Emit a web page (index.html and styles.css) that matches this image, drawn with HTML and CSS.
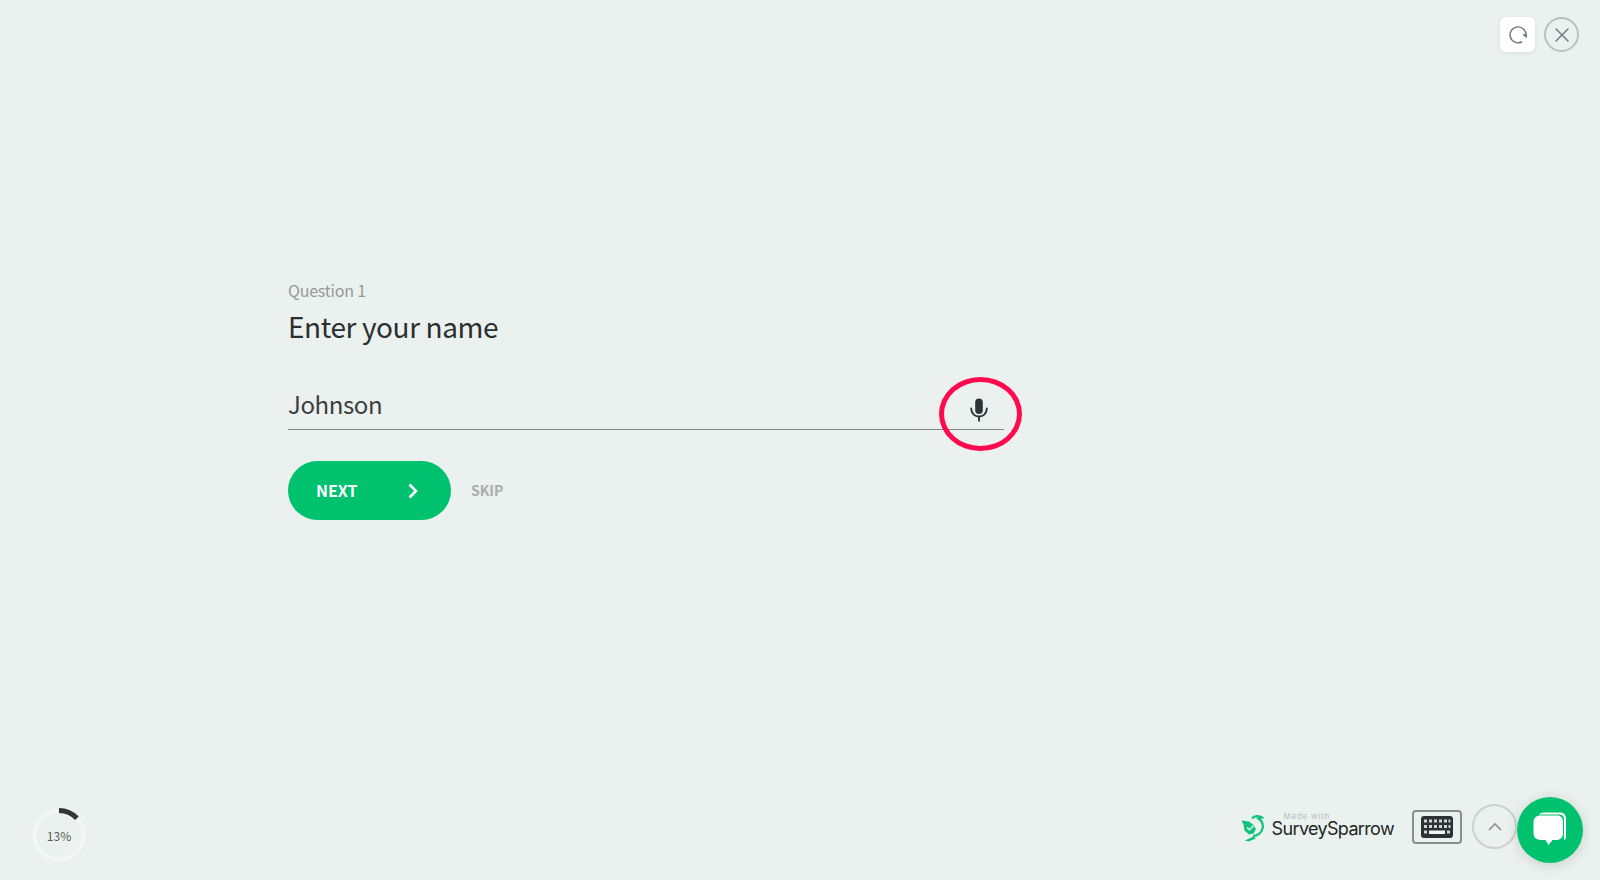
FILE: index.html
```html
<!DOCTYPE html>
<html lang="en">
<head>
<meta charset="utf-8">
<title>Survey</title>
<link rel="stylesheet" href="styles.css">
</head>
<body>
<div class="page">
  <header class="topbar">
    <button class="tool tool-refresh" aria-label="Restart">
      <svg width="18" height="18" viewBox="0 0 18 18" fill="none" stroke="#6f7577" stroke-width="1.4" stroke-linecap="round"><path d="M12.600 16A8 8 0 1 1 17 9.500"/><path d="M14.800 8.600l2.200 2.200 1-2.600" stroke-width="1.500"/></svg>
    </button>
    <button class="tool tool-close" aria-label="Close">
      <svg width="16" height="16" viewBox="0 0 16 16" fill="none" stroke="#6f7577" stroke-width="1.4" stroke-linecap="round"><path d="M2 2l12 12M14 2L2 14"/></svg>
    </button>
  </header>

  <main class="question">
    <p class="q-number">Question 1</p>
    <h1 class="q-title">Enter your name</h1>
    <div class="answer">
      <span class="answer-value">Johnson</span>
      <svg class="mic" width="20" height="24" viewBox="0 0 20 24" fill="none"><rect x="6.200" y="0.500" width="7.600" height="15.500" rx="3.800" fill="#2e3434"/><path d="M2.200 10.500c0 4.800 3.400 8 7.800 8s7.800-3.200 7.800-8" stroke="#2e3434" stroke-width="1.900" stroke-linecap="round"/><path d="M10 18.500V23.500" stroke="#2e3434" stroke-width="1.900"/></svg>
      <span class="annotation"></span>
    </div>
    <div class="actions">
      <button class="next">
        <span class="next-label">NEXT</span>
        <svg width="10" height="16" viewBox="0 0 10 16" fill="none" stroke="#fff" stroke-width="2.600"><path d="M1.500 1.500L8 8l-6.500 6.500"/></svg>
      </button>
      <span class="skip">SKIP</span>
    </div>
  </main>

  <footer class="footer">
    <div class="progress">
      <svg width="54" height="54" viewBox="0 0 54 54" fill="none"><circle cx="27" cy="27" r="24.500" stroke="#f3f6f5" stroke-width="4"/><path d="M27 2.500A24.500 24.500 0 0 1 44.900 10.300" stroke="#333636" stroke-width="5"/></svg>
      <span class="progress-label">13%</span>
    </div>
    <div class="footer-right">
      <div class="brand">
        <svg class="brand-mark" width="24" height="27" viewBox="0 0 24 27" fill="none"><path d="M0.500 5.500L8 6.500 12 9.500 15 14 12.500 18.500 8 19.500 3.500 15.500 2.500 9.500Z" fill="#0fc47a"/><path d="M6 12.500l2.500 2.300 4-4" stroke="#ebf1ee" stroke-width="1.500"/><path d="M11 3.500C13.500 0.500 18 0.500 21 2.500L17.500 3.500C21 6 22.500 9.500 21.500 13.500 20.500 18 16.500 21 12 21" stroke="#0fc47a" stroke-width="2.200"/><path d="M12.500 21.500L4 25.500 7.500 26.500 15 23.500Z" fill="#0fc47a"/></svg>
        <div class="brand-text">
          <span class="brand-made">Made with</span>
          <span class="brand-name">SurveySparrow</span>
        </div>
      </div>
      <button class="keyboard" aria-label="Keyboard">
        <svg width="32" height="22" viewBox="0 0 32 22"><rect width="32" height="22" rx="3" fill="#2e3131"/><g fill="#d0d4d3"><rect x="3" y="3.500" width="3" height="3"/><rect x="8" y="3.500" width="3" height="3"/><rect x="13" y="3.500" width="3" height="3"/><rect x="18" y="3.500" width="3" height="3"/><rect x="23" y="3.500" width="3" height="3"/><rect x="3" y="9" width="3" height="3"/><rect x="8" y="9" width="3" height="3"/><rect x="13" y="9" width="3" height="3"/><rect x="18" y="9" width="3" height="3"/><rect x="23" y="9" width="3" height="3"/><rect x="27.500" y="3.500" width="2" height="3"/><rect x="27.500" y="9" width="2" height="3"/><rect x="3" y="14.500" width="3" height="3"/><rect x="8" y="14.500" width="16" height="3.500" fill="#f3f5f4"/><rect x="26" y="14.500" width="3" height="3"/></g></svg>
      </button>
      <button class="up" aria-label="Previous">
        <svg width="14" height="9" viewBox="0 0 14 9" fill="none" stroke="#8f9494" stroke-width="1.600"><path d="M1 8l6-6 6 6"/></svg>
      </button>
    </div>
  </footer>
  <button class="chat" aria-label="Chat">
    <svg width="34" height="36" viewBox="0 0 34 36"><path d="M6 2.500C7 1 9 0.500 12 0.500H27C31 0.500 33 3 33 7V24C33 26 32.500 27.500 31 28.500V7C31 4 29 2.500 26 2.500Z" fill="#fff"/><path d="M8 3.500H24C28 3.500 30 6 30 10V21C30 25.500 27.500 28 23 28H19.500L15.500 33 12.500 28H8C3 28 0.500 25 0.500 21V10C0.500 6 3 3.500 8 3.500Z" fill="#fff"/></svg>
  </button>
</div>
</body>
</html>
```

FILE: styles.css
```css
* { box-sizing: border-box; }
html, body { margin: 0; padding: 0; height: 100%; }
body {
  background: #ebf1ee;
  font-family: "Noto Sans CJK SC", "Noto Sans", sans-serif;
  color: #2b2f2f;
  overflow: hidden;
}
button { border: 0; padding: 0; background: none; font: inherit; cursor: pointer; }
.page { position: relative; display: flex; flex-direction: column; height: 880px; }

.topbar { display: flex; justify-content: flex-end; gap: 9px; padding: 17px 21px 0 0; }
.tool { width: 35px; height: 35px; display: flex; align-items: center; justify-content: center; }
.tool-refresh { background: #fff; border-radius: 6px; box-shadow: 0 1px 4px rgba(0,0,0,.08); }
.tool-close { border: 2px solid #bcbfbe; border-radius: 50%; }

.question { padding: 226px 0 0 288px; }
.q-number { margin: 0; font-size: 16px; line-height: 24px; color: #959a99; letter-spacing: -.2px; }
.q-title { margin: 6px 0 0; font-size: 28px; line-height: 36px; font-weight: 400; color: #2b2f2f; letter-spacing: -.4px; }
.answer {
  position: relative;
  width: 716px;
  height: 57px;
  margin-top: 29px;
  padding-top: 8px;
  display: flex;
  align-items: center;
  justify-content: space-between;
  border-bottom: 1px solid #80858a;
}
.answer-value { font-size: 24px; line-height: 36px; color: #3a3e3e; letter-spacing: -.4px; margin-top: -2px; }
.mic { margin-right: 15px; margin-top: 10px; }
.annotation {
  position: absolute;
  left: 651px;
  top: 4px;
  width: 83px;
  height: 74px;
  border: 5px solid #ff0a4e;
  border-radius: 50%;
}
.actions { display: flex; align-items: center; gap: 20px; margin-top: 31px; }
.next {
  width: 163px;
  height: 59px;
  border-radius: 30px;
  background: #00c16e;
  color: #fff;
  font-size: 16px;
  font-weight: 700;
  display: flex;
  align-items: center;
  justify-content: space-between;
  padding: 0 33px 0 28px;
}
.next-label { margin-top: -2px; }
.skip { font-size: 14px; font-weight: 700; color: #a8adac; margin-top: -2px; }

.footer { margin-top: auto; display: flex; justify-content: space-between; align-items: flex-end; padding: 0 83px 31px 32px; }
.progress { position: relative; width: 54px; height: 54px; margin-bottom: -13px; }
.progress svg { display: block; }
.progress-label {
  position: absolute;
  inset: 0;
  display: flex;
  align-items: center;
  justify-content: center;
  font-size: 12px;
  color: #555a5a;
  padding-top: 1px;
}
.footer-right { display: flex; align-items: center; }
.brand { display: flex; align-items: center; gap: 7px; margin-right: 18px; }
.brand-mark { display: block; margin-top: 4px; }
.brand-text { display: flex; flex-direction: column; margin-top: -3px; }
.brand-made { font-family: "Inter", sans-serif; font-size: 8px; line-height: 8px; letter-spacing: .8px; color: #b9bdbc; padding-left: 12px; }
.brand-name { font-family: "Inter", sans-serif; font-size: 18px; line-height: 18px; color: #222626; letter-spacing: -.65px; }
.keyboard {
  width: 50px;
  height: 34px;
  border: 2px solid #8a8d8c;
  border-radius: 4px;
  display: flex;
  align-items: center;
  justify-content: center;
}
.keyboard svg { display: block; }
.up {
  width: 45px;
  height: 45px;
  margin-left: 10px;
  border: 2px solid #cdd0cf;
  border-radius: 50%;
  display: flex;
  align-items: center;
  justify-content: center;
}
.chat {
  position: absolute;
  left: 1517px;
  top: 797px;
  width: 66px;
  height: 66px;
  border-radius: 50%;
  background: #00c16e;
  box-shadow: 0 2px 14px rgba(0,0,0,.14);
  display: flex;
  align-items: center;
  justify-content: center;
}
```
